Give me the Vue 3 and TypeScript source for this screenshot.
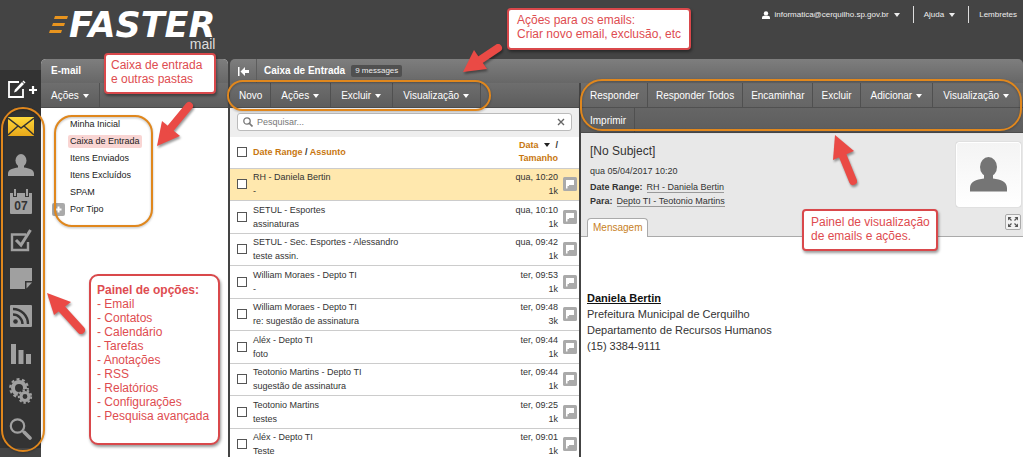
<script setup lang="ts">
import { ref } from 'vue'

interface Tool { label: string; menu?: boolean }
interface Mail { id: number; from: string; subject: string; date: string; size: string }

const listTools: Tool[] = [
  { label: 'Novo' },
  { label: 'Ações', menu: true },
  { label: 'Excluir', menu: true },
  { label: 'Visualização', menu: true },
]
const readTools: Tool[] = [
  { label: 'Responder' },
  { label: 'Responder Todos' },
  { label: 'Encaminhar' },
  { label: 'Excluir' },
  { label: 'Adicionar', menu: true },
  { label: 'Visualização', menu: true },
  { label: 'Imprimir' },
]
const folders = ['Minha Inicial', 'Caixa de Entrada', 'Itens Enviados', 'Itens Excluídos', 'SPAM', 'Por Tipo']
const options = ['Email', 'Contatos', 'Calendário', 'Tarefas', 'Anotações', 'RSS', 'Relatórios', 'Configurações', 'Pesquisa avançada']
const mails: Mail[] = [
  { id: 1, from: 'RH - Daniela Bertin', subject: '-', date: 'qua, 10:20', size: '1k' },
  { id: 2, from: 'SETUL - Esportes', subject: 'assinaturas', date: 'qua, 10:10', size: '1k' },
  { id: 3, from: 'SETUL - Sec. Esportes - Alessandro', subject: 'teste assin.', date: 'qua, 09:42', size: '1k' },
  { id: 4, from: 'William Moraes - Depto TI', subject: '-', date: 'ter, 09:53', size: '1k' },
  { id: 5, from: 'William Moraes - Depto TI', subject: 're: sugestão de assinatura', date: 'ter, 09:48', size: '3k' },
  { id: 6, from: 'Aléx - Depto TI', subject: 'foto', date: 'ter, 09:44', size: '1k' },
  { id: 7, from: 'Teotonio Martins - Depto TI', subject: 'sugestão de assinatura', date: 'ter, 09:44', size: '1k' },
  { id: 8, from: 'Teotonio Martins', subject: 'testes', date: 'ter, 09:25', size: '1k' },
  { id: 9, from: 'Aléx - Depto TI', subject: 'Teste', date: 'ter, 09:01', size: '1k' },
]
const selected = ref(1)
const folder = ref('Caixa de Entrada')
const query = ref('')
</script>

<template>
  <div class="page">
    <header class="top">
      <div class="logo">
        <svg class="speed" width="19" height="17" viewBox="0 0 19 17" aria-hidden="true">
          <path d="M6 0h13l-1 3H5zM4 7h12l-1 3H3zM1 14h12l-1 3H0z" fill="#e8941e" />
        </svg>
        <span class="brand">FASTER</span>
        <span class="sub">mail</span>
      </div>
      <div class="account">
        <button type="button">
          <svg width="8" height="8" viewBox="0 0 8 8" aria-hidden="true"><circle cx="4" cy="2.4" r="2.2" fill="#fff" /><path d="M0 8V6.500q0-1.500 2-1.800h4q2 .3 2 1.800V8z" fill="#fff" /></svg>
          informatica@cerquilho.sp.gov.br<i class="caret"></i>
        </button>
        <button type="button">Ajuda<i class="caret"></i></button>
        <button type="button">Lembretes</button>
      </div>
    </header>

    <div class="body">
      <aside class="rail">
        <button type="button" class="compose" aria-label="Novo email">
          <svg width="30" height="18" viewBox="0 0 30 18" fill="none" stroke="#fff">
            <path d="M11 2H1v15h14V9" stroke-width="1.800" />
            <path d="M7 9.500L14 2l2 2-7.500 7.500L6 12.500z" fill="#fff" stroke="none" /><path d="M15 1l2 2" stroke-width="1.500" />
            <path d="M21 10h8M25 6v8" stroke-width="2.200" />
          </svg>
        </button>
        <nav>
          <a href="#email" aria-label="Email">
            <svg width="26" height="19" viewBox="0 0 26 19">
              <defs><linearGradient id="gold" x2="0" y2="1"><stop stop-color="#ffd83a" /><stop offset="1" stop-color="#e9a91a" /></linearGradient></defs>
              <path d="M0 0h26v19H0z" fill="url(#gold)" />
              <path d="M0 1l13 10L26 1M0 18l10-9M26 18l-10-9" fill="none" stroke="#333" stroke-width="1.400" />
            </svg>
          </a>
          <a href="#contatos" aria-label="Contatos">
            <svg width="26" height="22" viewBox="0 0 26 22" fill="#a0a0a0"><ellipse cx="13" cy="6.500" rx="5.500" ry="6.500" /><path d="M10 11h6v2.500c5 .8 10 2 10 6V22H0v-2.500c0-4 5-5.200 10-6z" /></svg>
          </a>
          <a href="#calendario" aria-label="Calendário">
            <svg width="22" height="26" viewBox="0 0 22 26">
              <path d="M0 4h22v20q0 1-1 1H1q-1 0-1-1z" fill="#a0a0a0" />
              <path d="M3 0h4v8H3zM15 0h4v8h-4z" fill="#333" /><path d="M4 0h2v7H4zM16 0h2v7h-2z" fill="#a0a0a0" />
              <text x="11" y="21" text-anchor="middle" font-size="12" font-weight="700" fill="#333">07</text>
            </svg>
          </a>
          <a href="#tarefas" aria-label="Tarefas">
            <svg width="22" height="23" viewBox="0 0 22 23" fill="none" stroke="#a0a0a0">
              <path d="M16 5.500H2V21h16v-8" stroke-width="2.400" /><path d="M6 11l5 5L20.500 1" stroke-width="3" />
            </svg>
          </a>
          <a href="#anotacoes" aria-label="Anotações">
            <svg width="22" height="21" viewBox="0 0 22 21" fill="#a0a0a0"><path d="M0 0h22v13h-7v8H0z" /><path d="M16.500 14.500H22l-5.500 6z" /></svg>
          </a>
          <a href="#rss" aria-label="RSS">
            <svg width="22" height="22" viewBox="0 0 22 22">
              <rect width="22" height="22" rx="1" fill="#a0a0a0" /><circle cx="5.500" cy="16.500" r="2.300" fill="#333" />
              <path d="M3 9.500a9.500 9.500 0 0 1 9.500 9.500M3 4a15 15 0 0 1 15 15" fill="none" stroke="#333" stroke-width="2.400" />
            </svg>
          </a>
          <a href="#relatorios" aria-label="Relatórios">
            <svg width="20" height="20" viewBox="0 0 20 20" fill="#a0a0a0"><path d="M0 0h5v20H0zM7.500 6h5v14h-5zM15 10h5v10h-5z" /></svg>
          </a>
          <a href="#configuracoes" aria-label="Configurações">
            <svg width="24" height="26" viewBox="0 0 24 26" fill="none" stroke="#a0a0a0">
              <circle cx="10" cy="10" r="6" stroke-width="4" /><circle cx="10" cy="10" r="8.800" stroke-width="2.200" stroke-dasharray="3 2.530" />
              <circle cx="16" cy="18.500" r="7.500" fill="#333" stroke="none" />
              <circle cx="16" cy="18.500" r="4" stroke-width="3.200" /><circle cx="16" cy="18.500" r="6.200" stroke-width="2" stroke-dasharray="2.400 1.930" />
            </svg>
          </a>
          <a href="#pesquisa" aria-label="Pesquisa avançada">
            <svg width="23" height="22" viewBox="0 0 23 22" fill="none" stroke="#a0a0a0">
              <circle cx="8.500" cy="8" r="6.700" stroke-width="2.200" /><path d="M13 12.500l2 2" stroke-width="2" /><path d="M15.500 14.500l5.500 5.500" stroke-width="3.600" stroke-linecap="round" />
            </svg>
          </a>
          <div class="ring rail-ring"></div>
        </nav>
      </aside>

      <section class="folders">
        <h2 class="title"><span>E-mail</span></h2>
        <div class="toolbar"><button type="button" class="menu">Ações<i class="caret"></i></button></div>
        <div class="tree">
          <ul>
            <li v-for="f in folders" :key="f">
              <button v-if="f === 'Por Tipo'" type="button" class="plus" aria-label="Expandir Por Tipo">
                <svg width="13" height="13" viewBox="0 0 13 13"><path d="M3.500 6.500h6M6.500 3.500v6" stroke="#fff" stroke-width="2" /></svg>
              </button>
              <a href="#pasta" :class="{ current: f === folder }" @click.prevent="folder = f">{{ f }}</a>
            </li>
          </ul>
          <div class="ring folder-ring"></div>
        </div>
      </section>

      <main class="mail">
        <h2 class="title">
          <button type="button" class="collapse" aria-label="Recolher">
            <svg width="11" height="9" viewBox="0 0 11 9" fill="#fff"><path d="M0 0h1.500v9H0zM2.500 4.500L7 0v3h4v3H7v3z" /></svg>
          </button>
          <span>Caixa de Entrada</span><small>9 messages</small>
        </h2>
        <div class="split">
          <section class="list">
            <div class="toolbar">
              <div class="group">
                <button v-for="t in listTools" :key="t.label" type="button" :class="{ menu: t.menu }">{{ t.label }}<i v-if="t.menu" class="caret"></i></button>
                <div class="ring list-ring"></div>
              </div>
            </div>
            <div class="search">
              <label>
                <svg width="10" height="10" viewBox="0 0 10 10" fill="none" stroke="#777" aria-hidden="true"><circle cx="4" cy="4" r="3.200" stroke-width="1.300" /><path d="M6.500 6.500L9.500 9.500" stroke-width="1.700" /></svg>
                <input v-model="query" type="text" placeholder="Pesquisar..." aria-label="Pesquisar" />
                <button type="button" aria-label="Limpar" @click="query = ''">
                  <svg width="8" height="8" viewBox="0 0 8 8"><path d="M1 1l6 6M7 1L1 7" stroke="#666" stroke-width="1.400" /></svg>
                </button>
              </label>
            </div>
            <div class="scroll">
              <table>
                <thead>
                  <tr>
                    <th class="check"><input type="checkbox" aria-label="Selecionar todos" /></th>
                    <th class="from">Date Range <b>/</b> Assunto</th>
                    <th class="date">Data <i class="caret dark"></i> <b>/</b><br />Tamanho</th>
                    <th class="flag"></th>
                  </tr>
                </thead>
                <tbody>
                  <tr v-for="m in mails" :key="m.id" :class="{ selected: m.id === selected }" @click="selected = m.id">
                    <td class="check"><input type="checkbox" :aria-label="'Selecionar ' + m.from" /></td>
                    <td class="from">{{ m.from }}<br />{{ m.subject }}</td>
                    <td class="date">{{ m.date }}<br />{{ m.size }}</td>
                    <td class="flag">
                      <svg width="14" height="14" viewBox="0 0 14 14"><rect width="14" height="14" rx="1.500" fill="#aaa" /><path d="M3 3h8v5H6v1H4.500v2.500H3z" fill="#fff" /></svg>
                    </td>
                  </tr>
                </tbody>
              </table>
            </div>
          </section>

          <section class="reader">
            <div class="toolbar wrap">
              <button v-for="t in readTools" :key="t.label" type="button" :class="{ menu: t.menu }">{{ t.label }}<i v-if="t.menu" class="caret"></i></button>
              <div class="ring read-ring"></div>
            </div>
            <div class="head">
              <div class="info">
                <h1>[No Subject]</h1>
                <p class="when">qua 05/04/2017 10:20</p>
                <p><b>Date Range:</b><a href="#rh">RH - Daniela Bertin</a></p>
                <p><b>Para:</b><a href="#ti">Depto TI - Teotonio Martins</a></p>
                <button type="button" class="tab">Mensagem</button>
              </div>
              <div class="side">
                <div class="avatar">
                  <svg width="37" height="36" viewBox="0 0 37 36" fill="#757575"><ellipse cx="18.500" cy="10" rx="8.500" ry="10" /><path d="M14 17h9v4.500c8 .8 14 3.500 14 9.500v3.500H0V31c0-6 6-8.700 14-9.500z" /></svg>
                </div>
                <button type="button" class="expand" aria-label="Expandir">
                  <svg width="12" height="12" viewBox="0 0 12 12" fill="#555"><path d="M1 1h3.500L1 4.500zM11 1v3.500L7.500 1zM1 11V7.500L4.500 11zM11 11H7.500L11 7.500z" /><path d="M2 2l2.500 2.500M10 2L7.500 4.500M2 10l2.500-2.500M10 10L7.500 7.500" stroke="#555" stroke-width="1.200" /></svg>
                </button>
              </div>
            </div>
            <article>
              <strong>Daniela Bertin</strong>
              <p>Prefeitura Municipal de Cerquilho</p>
              <p>Departamento de Recursos Humanos</p>
              <p>(15) 3384-9111</p>
            </article>
          </section>
        </div>
      </main>
    </div>

    <svg class="arrows" width="1023" height="457" viewBox="0 0 1023 457" aria-hidden="true">
      <g fill="#ea4a45" stroke="#ea4a45" stroke-linecap="round">
        <path d="M157 146l5-25 18 15z" stroke="none" /><path d="M170 129l19-23" stroke-width="8" />
        <path d="M463 72l11-22 13 19z" stroke="none" /><path d="M480 60l18-12" stroke-width="8" />
        <path d="M47 293l24 9-17 13z" stroke="none" /><path d="M61 308l20 22" stroke-width="8" />
        <path d="M835 135l-2 25 21-9z" stroke="none" /><path d="M842 154l11 27" stroke-width="8" />
      </g>
    </svg>
    <div class="callout c-folders">Caixa de entrada<br />e outras pastas</div>
    <div class="callout c-actions">Ações para os emails:<br />Criar novo email, exclusão, etc</div>
    <div class="callout c-options">
      <b>Painel de opções:</b>
      <div v-for="o in options" :key="o">- {{ o }}</div>
    </div>
    <div class="callout c-reader">Painel de visualização<br />de emails e ações.</div>
  </div>
</template>

<style>
body { background: #444; }
</style>

<style scoped>
* { box-sizing: border-box; }
.page { position: relative; display: flex; flex-direction: column; height: 100vh; overflow: hidden; background: #444; color: #333; font: 9px/14px "Liberation Sans", Arial, sans-serif; }
button { padding: 0; border: 0; background: none; color: inherit; font: inherit; display: flex; align-items: center; }
a { color: inherit; text-decoration: none; }
h1, h2, p, ul { margin: 0; padding: 0; font-weight: 400; }
svg { display: block; }
.caret { display: inline-block; margin-left: 4px; border: 3px solid transparent; border-top: 4px solid currentColor; border-bottom: 0; }
.caret.dark { margin: 0 3px 1px; color: #222; }

.top { display: flex; flex: none; justify-content: space-between; align-items: flex-start; height: 59px; color: #fff; }
.logo { display: grid; grid-template-columns: 20px auto; margin-left: 49px; padding-top: 11px; }
.speed { margin-top: 5px; }
.brand { font: italic 700 35px/28px "DejaVu Sans", sans-serif; }
.sub { grid-column: 2; justify-self: end; margin-top: -2px; font-size: 14px; line-height: 14px; color: #ddd; }
.account { display: flex; margin-top: 6px; padding-right: 6px; font-size: 8px; }
.account button { height: 17px; padding-left: 10px; margin-left: 13px; border-left: 1px solid #ddd; color: #eee; }
.account button:first-child { border: 0; }
.account svg { margin-right: 4px; }
.account .caret { margin-left: 5px; }

.body { display: flex; flex: 1; min-height: 0; }
.rail { display: flex; flex-direction: column; flex: none; width: 41px; margin: 11px 0 9px; background: #333; }
.compose { height: 38px; padding-left: 8px; }
nav { position: relative; display: flex; flex: 1; flex-direction: column; }
nav a { display: flex; flex: 1; align-items: center; justify-content: center; }
nav text { font-family: "Liberation Sans", Arial, sans-serif; }
.ring { position: absolute; z-index: 3; border: 2px solid #e0871d; border-radius: 22px; pointer-events: none; filter: drop-shadow(0 1px 1px #0004); }
.rail-ring { inset: -1px -4px -4px 1px; }
.folder-ring { inset: 7px 75px auto 13px; height: 112px; border-radius: 18px; }
.list-ring { inset: -3px -10px -4px -3px; }
.read-ring { inset: -4px 1px 1px -1px; }

.title { display: flex; flex: none; align-items: center; height: 24px; border-radius: 5px 5px 0 0; background: linear-gradient(#7e7e7e, #676767); color: #fff; font-size: 10px; font-weight: 700; }
.title small { margin-left: 6px; padding: 0 4px; border-radius: 2px; background: #505050; color: #eee; font-size: 8px; line-height: 12px; font-weight: 400; }
.collapse { align-self: stretch; margin-right: 7px; padding: 0 7px 0 8px; border-right: 1px solid #5d5d5d; }
.toolbar { position: relative; display: flex; flex: none; min-height: 25px; border-bottom: 1px solid #4c4c4c; background: linear-gradient(#6e6e6e, #5d5d5d); color: #fff; font-size: 10px; }
.toolbar button { height: 24px; padding: 2px 8px 0; border-right: 1px solid #505050; }
.toolbar .menu { padding: 2px 10px 0; }
.group { position: relative; display: flex; padding-left: 1px; }
.group .menu { padding-right: 11px; }
.wrap { flex-wrap: wrap; padding-left: 1px; }
.wrap button { height: 25px; border-bottom: 1px solid #505050; }
.wrap button:nth-child(6) { flex: 1; border-right: 0; }
.wrap button:nth-child(7) { height: 24px; border-bottom: 0; }

.folders { display: flex; flex-direction: column; flex: none; width: 187px; margin-right: 2px; background: #fff; border-radius: 5px 5px 0 0; }
.folders .title { padding-left: 10px; }
.tree { position: relative; flex: 1; padding: 8px 0 0 27px; color: #222; }
ul { list-style: none; }
li { position: relative; display: flex; align-items: center; height: 17px; }
li a { padding: 0 2px; border-radius: 2px; line-height: 13px; }
.current { background: #f9d5d3; }
.plus { position: absolute; left: -16px; background: #aaa; border-radius: 2px; }

.mail { display: flex; flex: 1; flex-direction: column; min-width: 0; }
.split { display: flex; flex: 1; min-height: 0; }
.list { display: flex; flex: 0 1 349px; flex-direction: column; min-height: 0; margin-right: 2px; background: #fff; }
.search { flex: none; padding: 5px 7px 6px; background: #eee; }
.search label { display: flex; align-items: center; height: 18px; padding: 0 6px 0 5px; border: 1px solid #bbb; border-radius: 3px; background: #fff; }
.search input { flex: 1; min-width: 0; padding: 0 4px; border: 0; outline: 0; background: none; color: #333; font: inherit; }
.search input::placeholder { color: #777; opacity: 1; }
.scroll { flex: 1; min-height: 0; overflow: hidden; }
table { width: 100%; height: calc(100% + 4px); border-collapse: collapse; }
thead tr { height: 31px; }
th, td { padding: 0; border-bottom: 1px solid #ccc; text-align: left; vertical-align: middle; }
th { color: #c8760f; line-height: 13px; }
th b { color: #333; }
.check { width: 23px; padding-left: 7px; }
input[type="checkbox"] { display: block; width: 10px; height: 10px; margin: 0; border: 1px solid #555; background: #fff; appearance: none; }
input[type="checkbox"]:checked { background: #777; }
.date { width: 60px; text-align: right; white-space: nowrap; }
.flag { width: 21px; padding-left: 5px; }
.selected { background: #ffe8ae; }

.reader { display: flex; flex: 1; flex-direction: column; min-width: 0; background: #fff; }
.head { display: flex; justify-content: space-between; height: 104px; padding: 9px 2px 0 6px; border-bottom: 1px solid #aaa; background: #e8e8e8; }
.info { display: flex; flex-direction: column; align-items: flex-start; }
.info h1 { padding-left: 3px; font-size: 12px; line-height: 18px; }
.info p { padding-left: 3px; line-height: 14px; }
.info .when { padding: 4px 0 2px 3px; }
.info p a { margin-left: 4px; border-bottom: 1px solid #999; }
.tab { flex: none; height: 19px; margin-top: auto; margin-bottom: -1px; padding: 0 5px; border: 1px solid #aaa; border-bottom: 0; border-radius: 4px 4px 0 0; background: #fff; color: #c8811e; font-size: 10px; }
.side { display: flex; flex-direction: column; align-items: flex-end; gap: 7px; }
.avatar { display: grid; place-items: center; width: 65px; height: 65px; border: 1px solid #fff; border-radius: 3px; background: linear-gradient(#f4f4f4, #fff); box-shadow: 0 0 1px #999; }
.expand { padding: 1px; border: 1px solid #aaa; border-radius: 2px; background: #f2f2f2; }
article { padding: 53px 6px 0; font-size: 11px; line-height: 16px; }
article strong { color: #111; text-decoration: underline; }

.arrows { position: absolute; z-index: 4; top: 0; left: 0; pointer-events: none; filter: drop-shadow(1px 2px 1px #0006); }
.callout { position: absolute; z-index: 5; border: 2px solid #d9484b; border-radius: 4px; background: #fff; color: #de4c50; font-size: 12px; line-height: 14px; box-shadow: 1px 2px 3px #0006; white-space: nowrap; }
.c-folders { top: 53px; left: 104px; width: 112px; height: 41px; padding: 3px 5px; }
.c-actions { top: 8px; left: 507px; width: 184px; height: 42px; padding: 3px 8px; }
.c-options { top: 274px; left: 89px; width: 131px; height: 171px; padding: 7px 6px; border-radius: 9px; }
.c-reader { top: 209px; left: 802px; width: 136px; height: 42px; padding: 4px 7px; }
</style>
